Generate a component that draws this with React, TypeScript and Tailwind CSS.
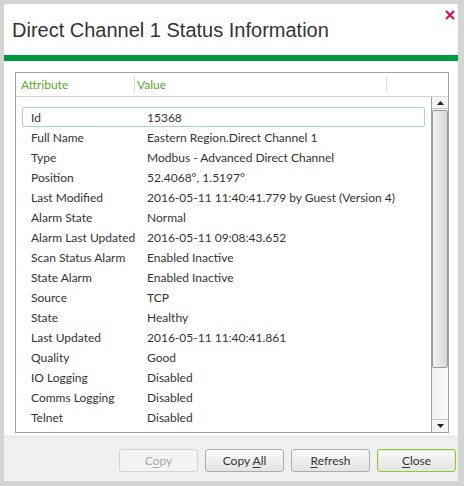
import React from "react";

const rows: [string, string][] = [
  ["Id", "15368"],
  ["Full Name", "Eastern Region.Direct Channel 1"],
  ["Type", "Modbus - Advanced Direct Channel"],
  ["Position", "52.4068°, 1.5197°"],
  ["Last Modified", "2016-05-11 11:40:41.779 by Guest (Version 4)"],
  ["Alarm State", "Normal"],
  ["Alarm Last Updated", "2016-05-11 09:08:43.652"],
  ["Scan Status Alarm", "Enabled Inactive"],
  ["State Alarm", "Enabled Inactive"],
  ["Source", "TCP"],
  ["State", "Healthy"],
  ["Last Updated", "2016-05-11 11:40:41.861"],
  ["Quality", "Good"],
  ["IO Logging", "Disabled"],
  ["Comms Logging", "Disabled"],
  ["Telnet", "Disabled"],
];

function Btn({
  pre,
  key1,
  post,
  disabled,
  primary,
}: {
  pre: string;
  key1: string;
  post: string;
  disabled?: boolean;
  primary?: boolean;
}) {
  const base =
    "w-[79px] h-[23px] rounded-[3px] border flex items-center justify-center text-[12px] leading-none";
  const cls = disabled
    ? "border-[#d2d2d2] bg-[#f4f4f4] text-[#a8a8a8]"
    : primary
    ? "border-[#8cc63f] bg-gradient-to-b from-[#fafafa] to-[#e4e4e4] text-[#333] shadow-[inset_0_0_0_1px_#e4f2d2]"
    : "border-[#acacac] bg-gradient-to-b from-[#fafafa] to-[#e4e4e4] text-[#333]";
  return (
    <div className={`${base} ${cls}`}>
      <span>
        {pre}
        <span className="underline underline-offset-2">{key1}</span>
        {post}
      </span>
    </div>
  );
}

export default function App() {
  return (
    <div className="w-[464px] h-[486px] bg-[#d4d4d4] pt-[4px] pl-[4px] overflow-hidden">
      <div
        className="relative w-[454px] h-[477px] bg-white rounded-tl-[3px] flex flex-col"
        style={{ fontFamily: "Lato, 'Open Sans', sans-serif" }}
      >
        <svg
          className="absolute left-[441px] top-[6px]"
          width="10"
          height="10"
          viewBox="0 0 10 10"
        >
          <path d="M1 1 L9 9 M9 1 L1 9" stroke="#d4145a" strokeWidth="2.2" />
        </svg>
        <div
          className="h-[51px] flex items-center pl-[8px] pt-[1px] text-[20px] text-[#333]"
          style={{ fontFamily: "'Liberation Sans', Arial, sans-serif" }}
        >
          Direct Channel 1 Status Information
        </div>
        <div className="h-[6px] bg-[#009a3e]" />
        <div className="flex-1 pt-[11px] pl-[11px] pr-[9px]">
          <div className="h-[361px] border border-[#a0a0a0] flex flex-col">
            <div className="h-[24px] border-b border-[#d6d6d6] flex items-center text-[12px] text-[#5aa829]">
              <div className="w-[119px] pl-[5px] flex items-center border-r border-[#dcdcdc] h-[15px]">
                Attribute
              </div>
              <div className="w-[252px] pl-[2px] h-[15px] flex items-center border-r border-[#dcdcdc]">
                Value
              </div>
            </div>
            <div className="flex-1 flex">
              <div className="flex-1 pt-[10px] pl-[6px] pr-[6px]">
                {rows.map(([a, v], i) => (
                  <div
                    key={a}
                    className={`h-[20px] flex items-center pt-[2px] text-[12px] text-[#333] rounded-[2px] border ${
                      i === 0 ? "border-[#a9c9ef]" : "border-transparent"
                    }`}
                  >
                    <div className="w-[124px] pl-[8px]">{a}</div>
                    <div className="whitespace-nowrap">{v}</div>
                  </div>
                ))}
              </div>
              <div className="w-[17px] border-l border-[#a0a0a0] flex flex-col bg-gradient-to-r from-[#f0f0f0] to-[#fafafa]">
                <div className="h-[12px] flex items-center justify-center border-b border-[#c8c8c8] bg-[#f4f4f4]">
                  <svg width="7" height="4" viewBox="0 0 7 4">
                    <path d="M0 4 L3.5 0 L7 4 Z" fill="#222" />
                  </svg>
                </div>
                <div className="h-[258px] mt-[1px] rounded-[2px] border border-[#9a9a9a] bg-gradient-to-r from-[#f4f4f4] to-[#d6d6d6]" />
                <div className="flex-1" />
                <div className="h-[13px] flex items-center justify-center border-t border-[#c8c8c8] bg-[#f4f4f4]">
                  <svg width="7" height="4" viewBox="0 0 7 4">
                    <path d="M0 0 L7 0 L3.5 4 Z" fill="#222" />
                  </svg>
                </div>
              </div>
            </div>
          </div>
        </div>
        <div className="h-[45px] border-t border-[#e2e2e2] bg-[#f0f0f0] flex items-center justify-end gap-[7px] pr-[2px] pt-[3px]">
          <Btn pre="C" key1="o" post="py" disabled />
          <Btn pre="Copy " key1="A" post="ll" />
          <Btn pre="" key1="R" post="efresh" />
          <Btn pre="" key1="C" post="lose" primary />
        </div>
      </div>
    </div>
  );
}
